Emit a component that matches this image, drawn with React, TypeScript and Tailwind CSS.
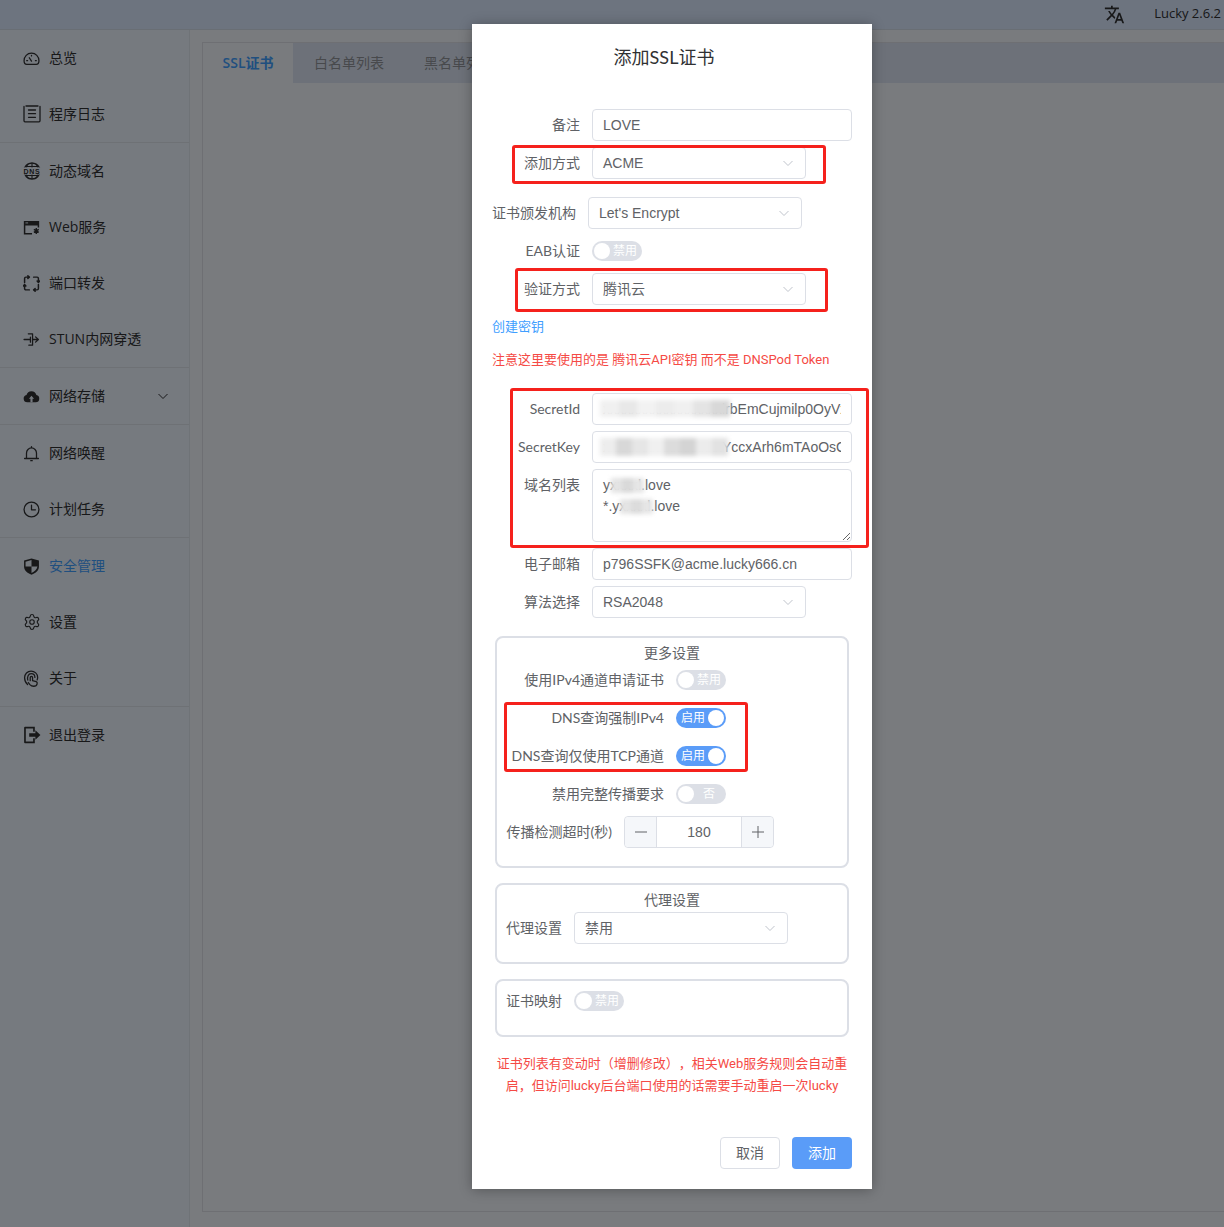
import React from "react";
import { MdTranslate } from "react-icons/md";
import { Settings } from "lucide-react";

const FONT = "[font-family:'Open_Sans','Noto_Sans_CJK_SC',sans-serif]";
const LABEL_FONT = "[font-family:'Lato','Noto_Sans_CJK_SC',sans-serif]";
const RED_FONT = "[font-family:'Roboto','Noto_Sans_CJK_SC',sans-serif]";
const INPUT_FONT = "[font-family:'Liberation_Sans','Noto_Sans_CJK_SC',sans-serif]";

const SIDE = "#ecf4ff";

type IconProps = { children: React.ReactNode };
const Ico = ({ children }: IconProps) => (
  <svg viewBox="0 0 16 16" className="w-[17px] h-[17px] shrink-0 text-[#303133]" fill="none" stroke="currentColor" strokeWidth="1.2" strokeLinecap="round" strokeLinejoin="round">
    {children}
  </svg>
);

const icons: Record<string, React.ReactNode> = {
  gauge: (
    <Ico>
      <path d="M3.600 13.500h8.800c1.500 0 2.600-1.400 2.600-3.400C15 6 12 3 8 3S1 6 1 10.100c0 2 1.100 3.400 2.600 3.400z" />
      <path d="M8 10.500 5.900 7.300M3.500 10h.8M11.700 10h.8M8 5v.6" />
    </Ico>
  ),
  log: (
    <svg viewBox="0 0 18 18" className="w-[18px] h-[18px] shrink-0 text-[#303133]" fill="none" stroke="currentColor" strokeWidth="1.300" strokeLinecap="round" strokeLinejoin="round">
      <path d="M1 1.500v14.300c0 .6.400 1 1 1h14c.6 0 1-.4 1-1V1.500" />
      <path d="M3 1h12M5.500 5h7M5.500 8.700h7M5.500 12.300h7" />
    </svg>
  ),
  dns: (
    <svg viewBox="0 0 18 18" className="w-[18px] h-[18px] shrink-0 text-[#303133]">
      <circle cx="9" cy="9" r="8" fill="none" stroke="currentColor" strokeWidth="1.400" />
      <path d="M9 1v16M5 1.800c-1.200 1.500-1.500 3-1.500 4M13 1.800c1.200 1.500 1.500 3 1.500 4M5 16.200c-1.200-1.500-1.500-3-1.500-4M13 16.200c1.200-1.500 1.500-3 1.500-4M2 4.500h14M2 13.500h14" fill="none" stroke="currentColor" strokeWidth="1.100" />
      <rect x="0" y="5.400" width="18" height="7.200" fill={SIDE} />
      <text x="9" y="11.700" textAnchor="middle" fontSize="7" fontWeight="700" letterSpacing="0.800" fill="currentColor" fontFamily="Liberation Sans">DNS</text>
    </svg>
  ),
  web: (
    <svg viewBox="0 0 16 16" className="w-[17px] h-[17px] shrink-0 text-[#303133]">
      <path fill="currentColor" d="M.8 1.800h14.400v6.200h-1.400V6.200H2.200v7h6.300v1.400H.8z" />
      <path stroke={SIDE} strokeWidth="0.900" d="M2.300 3.700h2.500" />
      <path stroke="currentColor" strokeWidth="1.300" d="M12.500 8.500v5.500M10.200 9.800l4.600 2.800M14.800 9.800l-4.600 2.800" />
    </svg>
  ),
  port: (
    <svg viewBox="0 0 16 16" className="w-[17px] h-[17px] shrink-0 text-[#303133]" fill="none" stroke="currentColor" strokeWidth="1.400" strokeLinecap="round" strokeLinejoin="round">
      <path d="M1.500 7V3.200c0-.7.500-1.200 1.200-1.200H6M4.600.8 6 2 4.600 3.200" />
      <path d="M10 2h3.300c.7 0 1.200.5 1.200 1.200V7M13.300 5.600 14.500 7l1.200-1.400" />
      <path d="M14.500 9v3.800c0 .7-.5 1.200-1.200 1.200H10M11.400 12.800 10 14l1.400 1.200" />
      <path d="M6 14H2.700c-.7 0-1.200-.5-1.200-1.200V9M.3 10.400 1.500 9l1.200 1.400" />
    </svg>
  ),
  stun: (
    <Ico>
      <path d="M5 2.700h4v10.600H5.500M1 8h6M7 10.500V5.800M11.800 5.500 14.500 8l-2.700 2.500M9 8h5" />
    </Ico>
  ),
  cloud: (
    <svg viewBox="0 0 16 16" className="w-[17px] h-[17px] shrink-0 text-[#303133]">
      <path fill="currentColor" d="M4 13.500A3.500 3.500 0 0 1 3.300 6.600 4.800 4.800 0 0 1 12.600 6.600 3.500 3.500 0 0 1 12 13.500z" />
      <path fill={SIDE} d="M8 7.200 5.600 10H7v3.500h2V10h1.400z" />
    </svg>
  ),
  bell: (
    <Ico>
      <path d="M1.500 12.700h13M3.300 12.700V7.500a4.700 4.700 0 0 1 9.400 0v5.200M8 1.500v1.200M7.300 14.800h1.400" />
    </Ico>
  ),
  clock: (
    <Ico>
      <circle cx="8" cy="8" r="7" />
      <path d="M8 4v4.300h3.700" />
    </Ico>
  ),
  shield: (
    <svg viewBox="0 0 16 16" className="w-[17px] h-[17px] shrink-0 text-[#303133]">
      <path fill="currentColor" d="M8 .400 15 2.400V8c0 3.600-3 6.400-7 7.700C4 14.400 1 11.600 1 8V2.400z" />
      <path fill={SIDE} d="M8 1.900 2.400 3.500V8H8zM8 8v6.100c2.900-1.200 5.200-3.400 5.600-6.100z" />
    </svg>
  ),
  gear: <Settings className="w-[18px] h-[18px] shrink-0 text-[#303133]" strokeWidth={1.5} />,
  ear: (
    <Ico>
      <path d="M4.300 13.600C2.600 12 1.500 9.800 1.500 7.200 1.500 3.700 4.200 1 7.600 1s6.200 2.600 6.200 6c0 .9-.2 1.600-.5 2.300" />
      <path d="M4.500 9.500C3.700 6.500 5 3.400 7.600 3.400c2.100 0 3.600 1.500 3.600 3.600" />
      <path d="M6.800 10V7.100c0-1.400 2.200-1.400 2.200 0V10l3.400 1c1.100.4 1.100 1.200.9 2-.3 1.400-1.300 2.300-3.300 2.300-1.600 0-2.600-.6-3.500-1.600L5 11.800" />
    </Ico>
  ),
  logout: (
    <svg viewBox="0 0 16 16" className="w-[18px] h-[18px] shrink-0 text-[#303133]">
      <path fill="currentColor" d="M1 1.500c0-.5.300-.8.800-.8h8.700v4.500H9V2.200H2.500v11.600H9v-3h1.500v4.500H1.800c-.5 0-.8-.3-.8-.8z" />
      <path fill="currentColor" d="M5.500 6.500H11V3.800L15.500 8 11 12.200V9.500H5.500z" />
    </svg>
  ),
};

type MenuEntry = { icon: string; label: string; active?: boolean; chevron?: boolean };
const groups: MenuEntry[][] = [
  [
    { icon: "gauge", label: "总览" },
    { icon: "log", label: "程序日志" },
  ],
  [
    { icon: "dns", label: "动态域名" },
    { icon: "web", label: "Web服务" },
    { icon: "port", label: "端口转发" },
    { icon: "stun", label: "STUN内网穿透" },
  ],
  [{ icon: "cloud", label: "网络存储", chevron: true }],
  [
    { icon: "bell", label: "网络唤醒" },
    { icon: "clock", label: "计划任务" },
  ],
  [
    { icon: "shield", label: "安全管理", active: true },
    { icon: "gear", label: "设置" },
    { icon: "ear", label: "关于" },
  ],
  [{ icon: "logout", label: "退出登录" }],
];

const Chevron = () => (
  <svg viewBox="0 0 12 12" className="w-[12px] h-[12px] text-[#c0c4cc]" fill="none" stroke="currentColor" strokeWidth="1">
    <path d="M1.500 4 6 8.500 10.500 4" />
  </svg>
);

const Label = ({ children, className = "w-[88px]" }: { children: React.ReactNode; className?: string }) => (
  <div className={`${className} shrink-0 mr-3 text-right text-sm text-[#606266] leading-8 whitespace-nowrap ${LABEL_FONT}`}>{children}</div>
);

const TextField = ({ value, className = "w-[260px]" }: { value: string; className?: string }) => (
  <input
    readOnly
    value={value}
    className={`${className} h-8 px-[10px] border border-[#dcdfe6] rounded text-sm text-[#606266] outline-none bg-white ${INPUT_FONT}`}
  />
);

const SelectBox = ({ value }: { value: string }) => (
  <div className={`w-[214px] h-8 pl-[10px] pr-[11px] border border-[#dcdfe6] rounded text-sm text-[#606266] flex items-center justify-between bg-white ${INPUT_FONT}`}>
    <span>{value}</span>
    <Chevron />
  </div>
);

const Switch = ({ on = false, text }: { on?: boolean; text: string }) => (
  <div className={`w-[50px] h-5 rounded-[10px] flex items-center px-[2px] text-xs text-white ${on ? "bg-[#5a9cf8] flex-row-reverse" : "bg-[#dcdfe6] flex-row"}`}>
    <span className="w-4 h-4 rounded-full bg-white shrink-0" />
    <span className="flex-1 text-center leading-5">{text}</span>
  </div>
);

const Mosaic = ({ className, blocks }: { className: string; blocks: string[] }) => (
  <div className={`absolute flex blur-[2px] ${className}`}>
    {blocks.map((b, i) => (
      <span key={i} className="flex-1 h-full" style={{ backgroundColor: b }} />
    ))}
  </div>
);

const RedBox = ({ className }: { className: string }) => (
  <div className={`absolute border-[3px] border-[#f5211c] rounded-[3px] pointer-events-none ${className}`} />
);

export default function App() {
  return (
    <div className={`relative w-full h-[1227px] overflow-hidden bg-[#f2f6fc] ${FONT}`}>
      <header className="h-[30px] bg-[#dae8ff] border-b border-[#d3dde8] flex items-center justify-end">
        <MdTranslate className="w-[21px] h-[21px] text-[#303133] mr-[29px]" />
        <span className="text-[13px] text-[#303133] mr-[3px] -mt-[1px] whitespace-nowrap">Lucky 2.6.2</span>
      </header>
      <div className="flex h-[1197px]">
        <aside className="w-[190px] shrink-0 bg-[#ecf4ff] border-r border-[#dfe6ee]">
          {groups.map((g, i) => (
            <div key={i} className="border-b border-[#dde3ea] last:border-b-0">
              {g.map((it) => (
                <div key={it.label} className="h-14 pl-[23px] pr-5 flex items-center">
                  <span className="w-[26px] shrink-0 flex items-center">{icons[it.icon]}</span>
                  <span className={`text-sm whitespace-nowrap ${it.active ? "text-[#409eff]" : "text-[#303133]"}`}>{it.label}</span>
                  {it.chevron && (
                    <svg viewBox="0 0 12 12" className="w-[12px] h-[12px] ml-auto mr-0 text-[#303133]" fill="none" stroke="currentColor" strokeWidth="1">
                      <path d="M1.500 4 6 8.500 10.500 4" />
                    </svg>
                  )}
                </div>
              ))}
            </div>
          ))}
        </aside>
        <main className="w-[1040px] shrink-0 pl-3 pt-3">
          <div className="h-[1170px] border border-[#dcdfe6] bg-[#f2f6fc]">
            <div className="h-10 flex bg-[#dae3f3] text-sm text-[#909399]">
              <div className="h-[40px] w-[90px] bg-[#f2f6fc] text-[#409eff] font-semibold flex items-center justify-center">SSL证书</div>
              <div className="px-5 ml-[1px] leading-10 whitespace-nowrap">白名单列表</div>
              <div className="px-5 leading-10 whitespace-nowrap">黑名单列表</div>
            </div>
          </div>
        </main>
      </div>

      <div className="absolute inset-0 bg-black/50 flex justify-start items-start pt-6 pl-[472px]">
        <div className="relative w-[400px] h-[1165px] bg-white shadow-[0_1px_12px_rgba(0,0,0,0.3)] px-5">
          <h2 className={`pt-5 pr-4 text-center text-lg leading-[26px] text-[#303133] ${LABEL_FONT}`}>添加SSL证书</h2>

          <div className="mt-[39px] flex">
            <Label>备注</Label>
            <TextField value="LOVE" />
          </div>
          <div className="mt-[6px] flex">
            <Label>添加方式</Label>
            <SelectBox value="ACME" />
          </div>
          <div className="mt-[18px] flex">
            <Label className="w-[84px]">证书颁发机构</Label>
            <SelectBox value="Let's Encrypt" />
          </div>
          <div className="mt-[6px] flex items-center">
            <Label>EAB认证</Label>
            <Switch text="禁用" />
          </div>
          <div className="mt-[6px] flex">
            <Label>验证方式</Label>
            <SelectBox value="腾讯云" />
          </div>
          <div className={`mt-[11px] text-[13px] leading-[22px] text-[#409eff] ${RED_FONT}`}>创建密钥</div>
          <div className={`mt-[11px] text-[13px] leading-[22px] text-[#f54a45] whitespace-nowrap ${RED_FONT}`}>注意这里要使用的是 腾讯云API密钥 而不是 DNSPod Token</div>

          <div className="mt-[22px] flex">
            <Label>SecretId</Label>
            <TextField value="xxxxxxxxxxxxxxxxxlrbEmCujmilp0OyVxQ" />
          </div>
          <div className="mt-[6px] flex">
            <Label>SecretKey</Label>
            <TextField value="xxxxxxxxxxxxxxxxxYccxArh6mTAoOsCmQ" />
          </div>
          <div className="mt-[6px] flex">
            <Label className="w-[88px]">域名列表</Label>
            <textarea
              readOnly
              value={"yxxxxl.love\n*.yxxxxl.love"}
              className={`w-[260px] h-[73px] px-[10px] py-[5px] border border-[#dcdfe6] rounded text-sm leading-[21px] text-[#606266] outline-none resize-y ${INPUT_FONT}`}
            />
          </div>
          <div className="mt-[6px] flex">
            <Label>电子邮箱</Label>
            <TextField value="p796SSFK@acme.lucky666.cn" />
          </div>
          <div className="mt-[6px] flex">
            <Label>算法选择</Label>
            <SelectBox value="RSA2048" />
          </div>

          <section className="mt-[18px] ml-[3px] w-[354px] h-[232px] border-2 border-[#dcdfe6] rounded-lg px-[9px]">
            <div className={`text-center text-sm leading-[30px] text-[#606266] h-[26px] ${LABEL_FONT}`}>更多设置</div>
            <div className="flex items-center h-[32px]">
              <Label className="w-[158px]">使用IPv4通道申请证书</Label>
              <Switch text="禁用" />
            </div>
            <div className="flex items-center h-[32px] mt-[6px]">
              <Label className="w-[158px]">DNS查询强制IPv4</Label>
              <Switch on text="启用" />
            </div>
            <div className="flex items-center h-[32px] mt-[6px]">
              <Label className="w-[158px]">DNS查询仅使用TCP通道</Label>
              <Switch on text="启用" />
            </div>
            <div className="flex items-center h-[32px] mt-[6px]">
              <Label className="w-[158px]">禁用完整传播要求</Label>
              <Switch text="否" />
            </div>
            <div className="flex items-center h-[32px] mt-[6px]">
              <Label className="w-[106px]">传播检测超时(秒)</Label>
              <div className="w-[150px] h-8 border border-[#dcdfe6] rounded flex text-sm text-[#606266] bg-white">
                <div className="w-[32px] bg-[#f5f7fa] border-r border-[#dcdfe6] flex items-center justify-center rounded-l">
                  <svg viewBox="0 0 12 12" className="w-3 h-3" stroke="#606266" strokeWidth="1"><path d="M0 6h12" /></svg>
                </div>
                <div className={`flex-1 flex items-center justify-center ${INPUT_FONT}`}>180</div>
                <div className="w-[32px] bg-[#f5f7fa] border-l border-[#dcdfe6] flex items-center justify-center rounded-r">
                  <svg viewBox="0 0 12 12" className="w-3 h-3" stroke="#606266" strokeWidth="1"><path d="M0 6h12M6 0v12" /></svg>
                </div>
              </div>
            </div>
          </section>

          <section className="mt-[15px] ml-[3px] w-[354px] h-[81px] border-2 border-[#dcdfe6] rounded-lg px-[9px]">
            <div className={`text-center text-sm leading-[30px] text-[#606266] h-[27px] ${LABEL_FONT}`}>代理设置</div>
            <div className="flex">
              <Label className="w-[56px]">代理设置</Label>
              <SelectBox value="禁用" />
            </div>
          </section>

          <section className="mt-[15px] ml-[3px] w-[354px] h-[58px] border-2 border-[#dcdfe6] rounded-lg px-[9px] pt-[4px]">
            <div className="flex items-center h-8">
              <Label className="w-[56px]">证书映射</Label>
              <Switch text="禁用" />
            </div>
          </section>

          <p className={`mt-[16px] text-center text-[13px] leading-[22px] text-[#f54a45] [text-spacing-trim:space-all] ${RED_FONT}`}>
            证书列表有变动时（增删修改），相关Web服务规则会自动重启，但访问lucky后台端口使用的话需要手动重启一次lucky
          </p>

          <div className={`absolute right-5 bottom-5 flex gap-3 ${LABEL_FONT}`}>
            <button className="w-[60px] h-8 border border-[#dcdfe6] rounded text-sm text-[#606266] bg-white">取消</button>
            <button className="w-[60px] h-8 rounded text-sm text-white bg-[#5a9cf8]">添加</button>
          </div>

          <Mosaic className="left-[128px] top-[376px] w-[130px] h-[17px]" blocks={["#f0f0f0", "#e8e8e8", "#f2f2f2", "#ececec", "#f0f0f0", "#e4e4e4", "#d8d8d8"]} />
          <Mosaic className="left-[128px] top-[414px] w-[128px] h-[18px]" blocks={["#ededed", "#d8d8d8", "#e6e6e6", "#f0f0f0", "#dcdcdc", "#d4d4d4", "#ececec", "#e2e2e2"]} />
          <Mosaic className="left-[139px] top-[454px] w-[33px] h-[15px]" blocks={["#e4e4e4", "#d9d9d9", "#e6e6e6"]} />
          <Mosaic className="left-[148px] top-[475px] w-[33px] h-[15px]" blocks={["#e4e4e4", "#dcdcdc", "#e6e6e6"]} />

          <RedBox className="left-[40px] top-[121px] w-[314px] h-[39px]" />
          <RedBox className="left-[43px] top-[244px] w-[313px] h-[44px]" />
          <RedBox className="left-[38px] top-[364px] w-[359px] h-[160px]" />
          <RedBox className="left-[32px] top-[678px] w-[244px] h-[70px]" />
        </div>
      </div>
    </div>
  );
}
